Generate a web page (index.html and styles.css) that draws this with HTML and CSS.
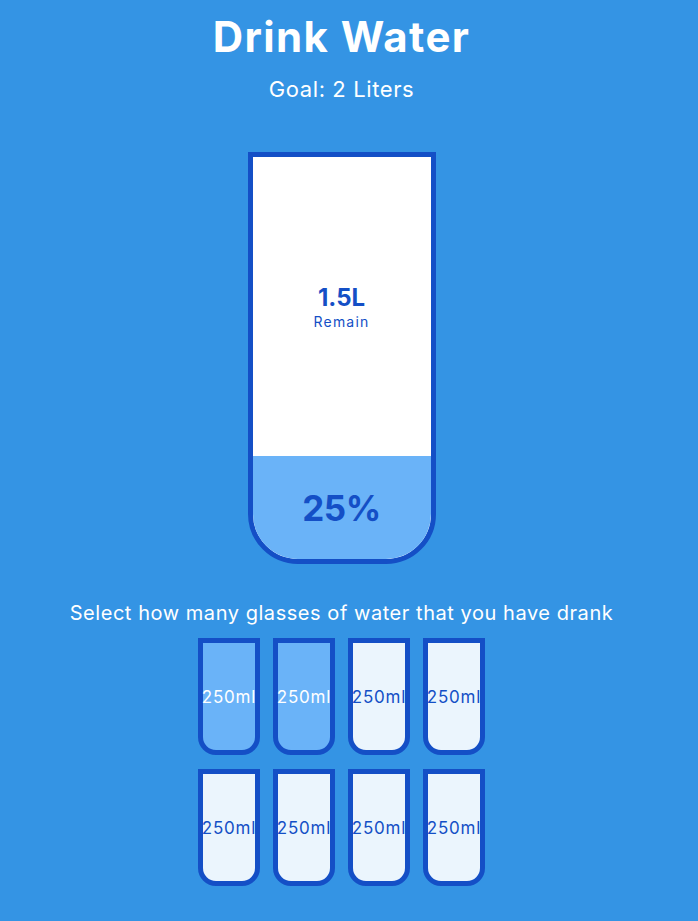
FILE: index.html
```html
<!DOCTYPE html>
<html lang="en">
  <head>
    <meta charset="UTF-8" />
    <meta name="viewport" content="width=device-width, initial-scale=1.0" />
    <title>Drink Water</title>
    <link rel="stylesheet" href="styles.css">
  </head>
  <body>
    <div class="page">
      <h1>Drink Water</h1>
      <h3>Goal: 2 Liters</h3>

      <div class="cup">
        <div class="remained">
          <span>1.5L</span>
          <small>Remain</small>
        </div>
        <div class="percentage" style="height: 103px">25%</div>
      </div>

      <p class="text">Select how many glasses of water that you have drank</p>

      <div class="cups">
        <div class="cup cup-small full">250ml</div>
        <div class="cup cup-small full">250ml</div>
        <div class="cup cup-small">250ml</div>
        <div class="cup cup-small">250ml</div>
        <div class="cup cup-small">250ml</div>
        <div class="cup cup-small">250ml</div>
        <div class="cup cup-small">250ml</div>
        <div class="cup cup-small">250ml</div>
      </div>
    </div>
  </body>
</html>
```

FILE: styles.css
```css
:root {
    --border-color: #144fc6;
    --fill-color: #6ab3f8;
}
body {
    margin: 0;
    background-color: #3494e4;
    color: #fff;
    font-family: Inter, "Open Sans", sans-serif;
}
.page {
    width: 683px;
    display: flex;
    flex-direction: column;
    align-items: center;
}
h1 {
    margin: 12px 0 0;
    font-size: 42px;
    line-height: 50px;
    font-weight: 700;
    letter-spacing: 1.4px;
}
h3 {
    margin: 13px 0 0;
    font-size: 22px;
    line-height: 28px;
    font-weight: 400;
    letter-spacing: 0.6px;
}
.cup {
    box-sizing: border-box;
    background-color: #fff;
    border: 5px solid var(--border-color);
    color: var(--border-color);
    border-radius: 0 0 50px 50px;
    width: 188px;
    height: 412px;
    margin: 49px 0 0;
    display: flex;
    flex-direction: column;
    overflow: hidden;
}
.remained {
    flex: 1;
    display: flex;
    flex-direction: column;
    align-items: center;
    justify-content: center;
    text-align: center;
}
.remained span {
    font-size: 24px;
    line-height: 30px;
    font-weight: 700;
}
.remained small {
    font-size: 14px;
    line-height: 18px;
    letter-spacing: 1.2px;
}
.percentage {
    background-color: var(--fill-color);
    display: flex;
    align-items: center;
    justify-content: center;
    font-size: 35px;
    font-weight: 700;
    letter-spacing: -0.5px;
}
.text {
    margin: 36px 0 0;
    font-size: 20px;
    line-height: 26px;
    text-align: center;
    letter-spacing: 0.55px;
}
.cups {
    margin-top: 12px;
    display: grid;
    grid-template-columns: repeat(4, 62px);
    column-gap: 13px;
    row-gap: 14px;
}
.cup.cup-small {
    width: 62px;
    height: 117px;
    margin: 0;
    border-radius: 0 0 18px 18px;
    background-color: rgba(255, 255, 255, 0.9);
    font-size: 17px;
    letter-spacing: 0.8px;
    align-items: center;
    justify-content: center;
    text-align: center;
    overflow: visible;
}
.cup.cup-small.full {
    background-color: var(--fill-color);
    color: #fff;
}
```
